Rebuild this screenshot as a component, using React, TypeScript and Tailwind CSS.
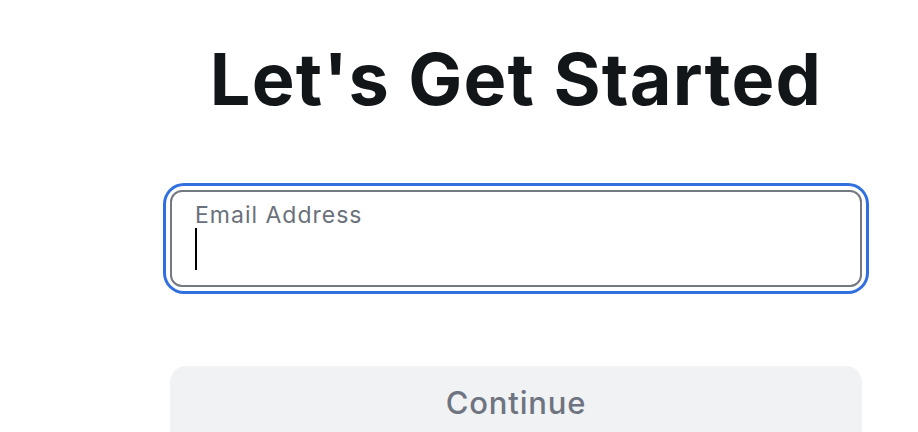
export default function App() {
  return (
    <div className="h-[432px] w-[918px] overflow-hidden bg-white" style={{ fontFamily: "Inter, 'Liberation Sans', sans-serif" }}>
      <div className="ml-[170px] flex w-[692px] flex-col">
        <h1 className="mt-[35px] text-center text-[72px] font-bold leading-[88px] tracking-[1.2px] text-[#131619]">
          Let's Get Started
        </h1>

        {/* Email field, focused */}
        <div className="mt-[67px] rounded-[14px] ring-[3px] ring-[#2f6fe0] ring-offset-4 ring-offset-white">
          <div className="h-[97px] rounded-[12px] border-2 border-[#747880] bg-white px-[23px] pt-[9px]">
            <div className="text-[23px] leading-[28px] tracking-[1px] text-[#6a707b]">Email Address</div>
            <div className="-mt-px h-[42px] w-[2px] bg-black" />
          </div>
        </div>

        <button className="mt-[79px] flex h-[80px] w-full items-start justify-center rounded-[16px] bg-[#f1f2f4] pt-[17px] text-[31px] font-medium leading-[40px] tracking-[0.8px] text-[#6e7480]">
          Continue
        </button>
      </div>
    </div>
  );
}
